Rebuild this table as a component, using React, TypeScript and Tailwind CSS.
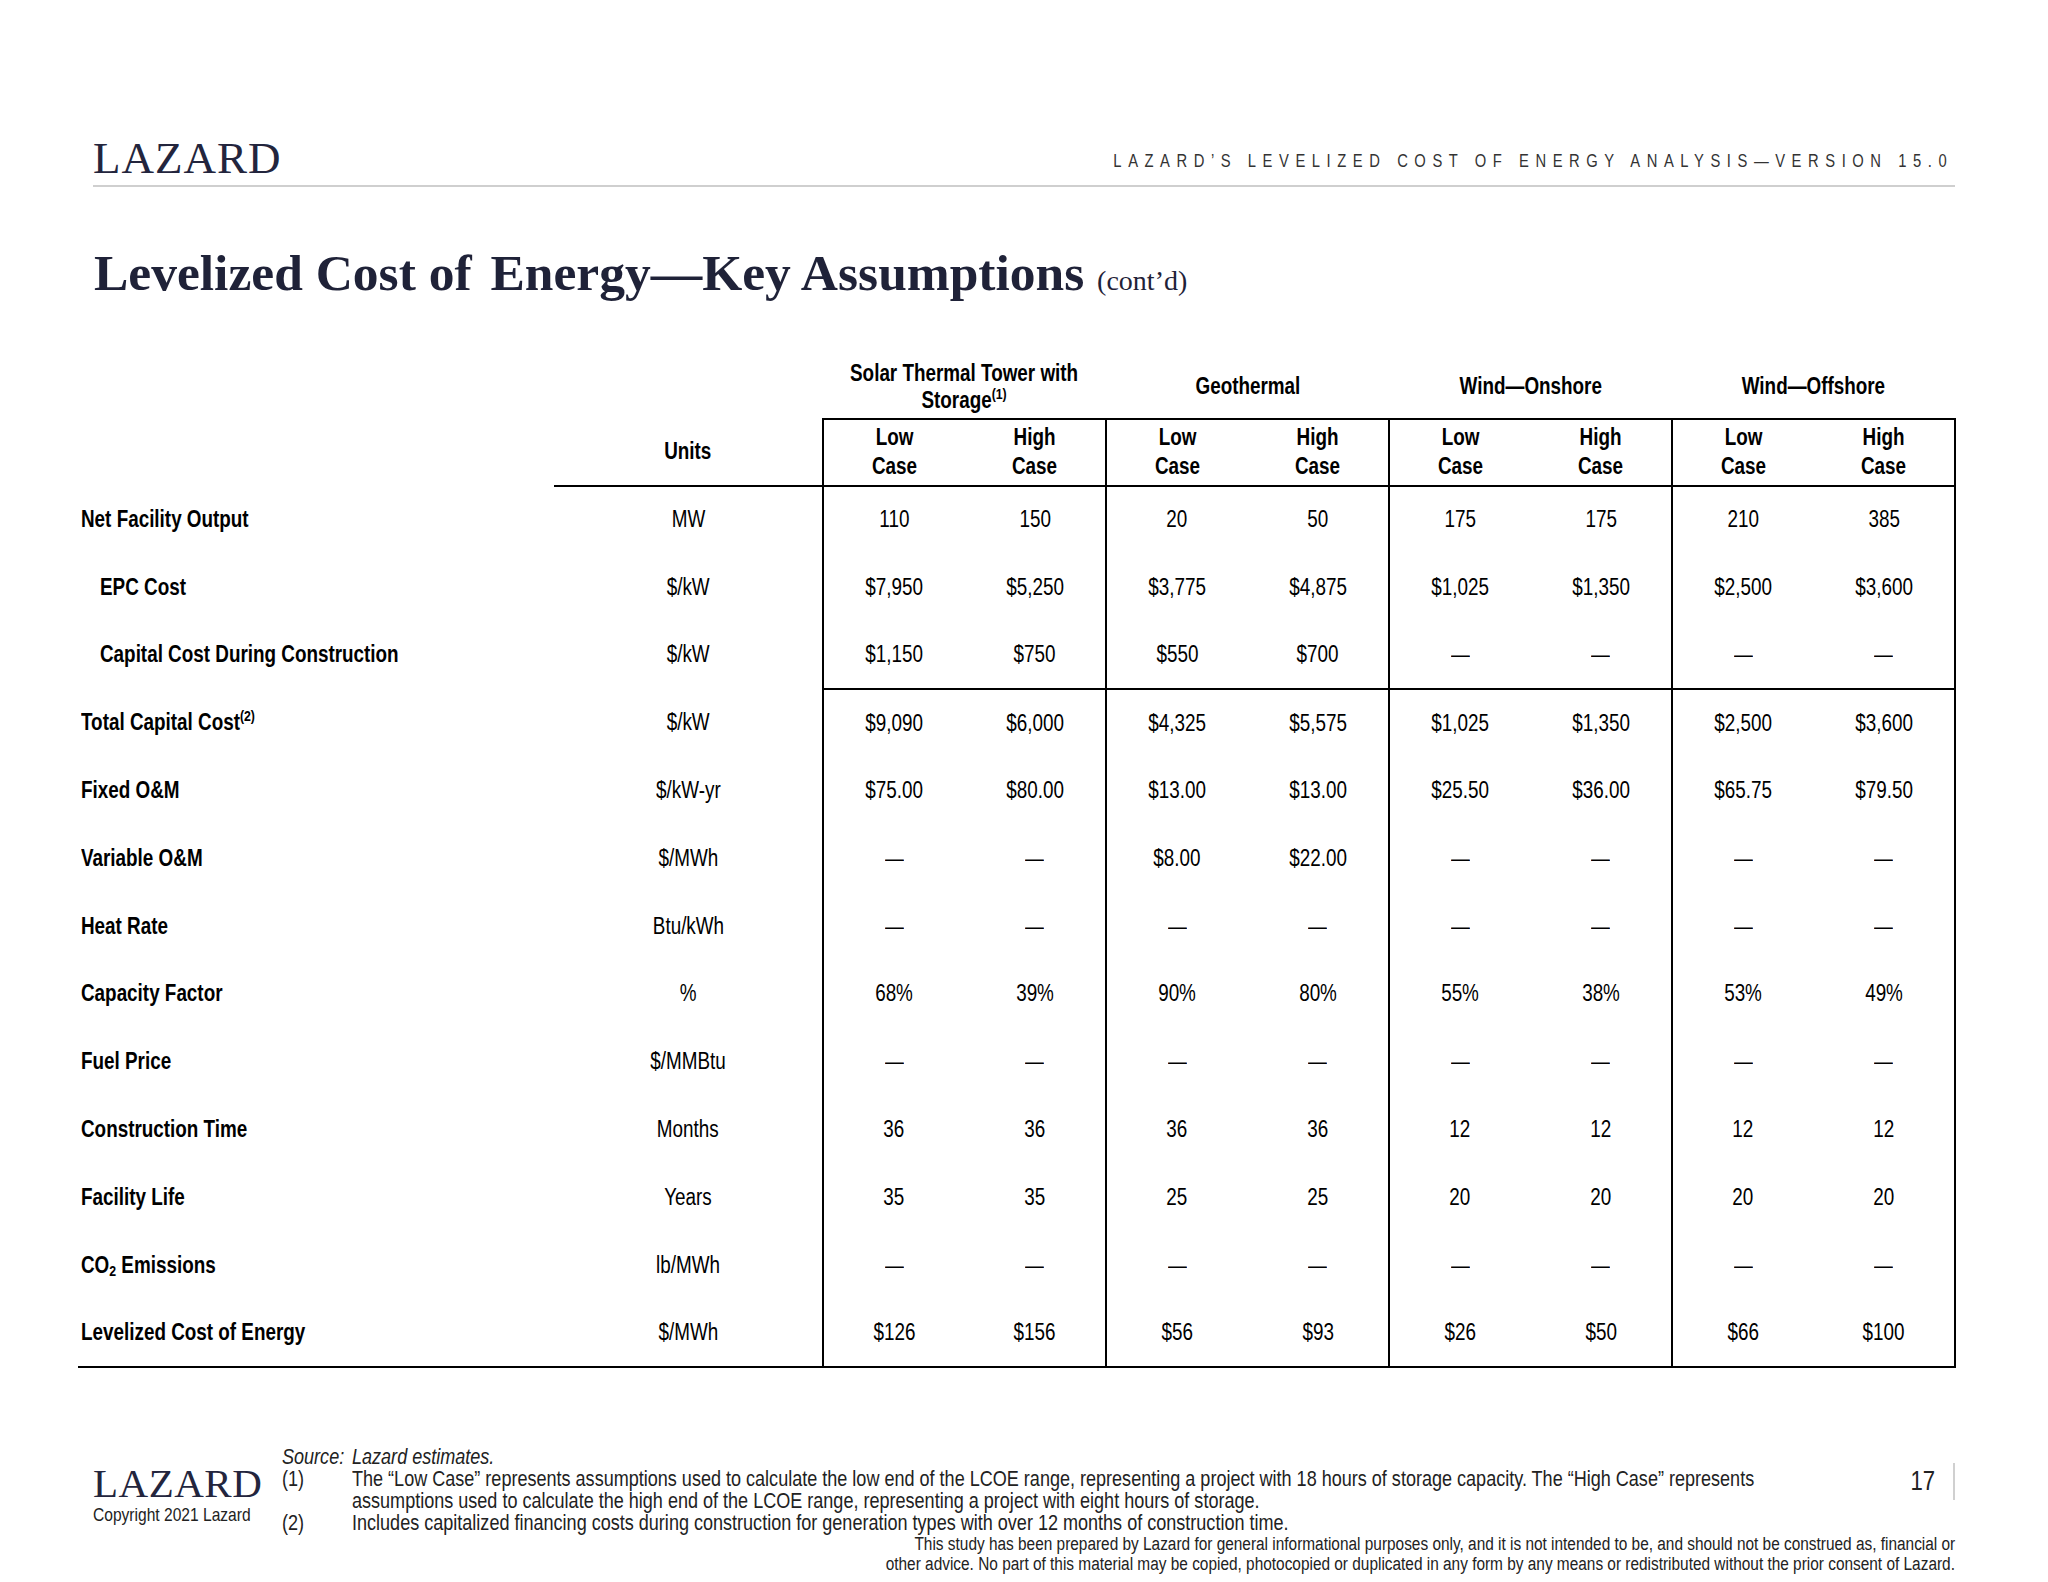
import React from "react";

const sans = { fontFamily: '"Liberation Sans", Arial, sans-serif' };
const serif = { fontFamily: '"Liberation Serif", "Times New Roman", serif' };

// Arial Narrow is not installed, so Arial metrics are squeezed horizontally
const Narrow = ({ children, origin = "origin-center" }: { children: React.ReactNode; origin?: string }) => (
  <span className={`inline-block whitespace-nowrap scale-x-[0.82] ${origin}`}>{children}</span>
);

type Row = {
  label: React.ReactNode;
  unit: string;
  values: string[];
  indent?: boolean;
  divider?: boolean;
};

const D = "—";

const rows: Row[] = [
  { label: "Net Facility Output", unit: "MW", values: ["110", "150", "20", "50", "175", "175", "210", "385"] },
  { label: "EPC Cost", unit: "$/kW", indent: true, values: ["$7,950", "$5,250", "$3,775", "$4,875", "$1,025", "$1,350", "$2,500", "$3,600"] },
  { label: "Capital Cost During Construction", unit: "$/kW", indent: true, divider: true, values: ["$1,150", "$750", "$550", "$700", D, D, D, D] },
  {
    label: (
      <>
        Total Capital Cost<sup className="text-[15px] -top-[0.6em]">(2)</sup>
      </>
    ),
    unit: "$/kW",
    values: ["$9,090", "$6,000", "$4,325", "$5,575", "$1,025", "$1,350", "$2,500", "$3,600"],
  },
  { label: "Fixed O&M", unit: "$/kW-yr", values: ["$75.00", "$80.00", "$13.00", "$13.00", "$25.50", "$36.00", "$65.75", "$79.50"] },
  { label: "Variable O&M", unit: "$/MWh", values: [D, D, "$8.00", "$22.00", D, D, D, D] },
  { label: "Heat Rate", unit: "Btu/kWh", values: [D, D, D, D, D, D, D, D] },
  { label: "Capacity Factor", unit: "%", values: ["68%", "39%", "90%", "80%", "55%", "38%", "53%", "49%"] },
  { label: "Fuel Price", unit: "$/MMBtu", values: [D, D, D, D, D, D, D, D] },
  { label: "Construction Time", unit: "Months", values: ["36", "36", "36", "36", "12", "12", "12", "12"] },
  { label: "Facility Life", unit: "Years", values: ["35", "35", "25", "25", "20", "20", "20", "20"] },
  {
    label: (
      <>
        CO<sub className="text-[15px]">2</sub> Emissions
      </>
    ),
    unit: "lb/MWh",
    values: [D, D, D, D, D, D, D, D],
  },
  { label: "Levelized Cost of Energy", unit: "$/MWh", values: ["$126", "$156", "$56", "$93", "$26", "$50", "$66", "$100"] },
];

const groups: React.ReactNode[] = [
  <>
    Solar Thermal Tower with
    <br />
    Storage<sup className="text-[15px] -top-[0.6em]">(1)</sup>
  </>,
  "Geothermal",
  "Wind—Onshore",
  "Wind—Offshore",
];

function sideBorder(i: number) {
  return i % 2 === 0 ? "border-l-2" : "border-r-2";
}

export default function App() {
  return (
    <div className="w-[2048px] h-[1582px] bg-white overflow-hidden text-black" style={sans}>
      {/* header */}
      <div className="mx-[93px] pt-[136px] flex items-end justify-between">
        <div className="text-[45px] leading-none text-[#23253d] tracking-[1px]" style={serif}>
          LAZARD
        </div>
        <div className="text-[18px] leading-[18px] mb-[11px] mr-[2px] tracking-[8px] text-[#333]">
          <Narrow origin="origin-right">LAZARD’S LEVELIZED COST OF ENERGY ANALYSIS—VERSION 15.0</Narrow>
        </div>
      </div>
      <div className="mx-[93px] mt-[4px] h-[2px] bg-[#cfcfcf]" />

      <h1 className="ml-[94px] mt-[60px] text-[51.5px] leading-none font-bold text-[#1f2238]" style={serif}>
        Levelized Cost of <span className="ml-[6px]">Energy—Key Assumptions</span>{" "}
        <span className="text-[28px] font-normal">(cont’d)</span>
      </h1>

      {/* table */}
      <table className="ml-[78px] mt-[57px] w-[1877px] table-fixed border-collapse">
        <colgroup>
          <col className="w-[476px]" />
          <col className="w-[269px]" />
          {Array.from({ length: 8 }).map((_, i) => (
            <col key={i} className="w-[141.5px]" />
          ))}
        </colgroup>
        <thead>
          <tr className="h-[63px] text-[23px] leading-[27px]">
            <th />
            <th />
            {groups.map((g, i) => (
              <th key={i} colSpan={2} className="align-middle text-center font-bold">
                <Narrow>{g}</Narrow>
              </th>
            ))}
          </tr>
          <tr className="h-[67px] text-[23px] leading-[29px]">
            <th />
            <th className="border-b-2 border-black text-center font-bold">
              <Narrow>Units</Narrow>
            </th>
            {Array.from({ length: 8 }).map((_, i) => (
              <th key={i} className={`border-t-2 border-b-2 border-black text-center font-bold ${sideBorder(i)}`}>
                <Narrow>
                  {i % 2 === 0 ? "Low" : "High"}
                  <br />
                  Case
                </Narrow>
              </th>
            ))}
          </tr>
        </thead>
        <tbody>
          {rows.map((r, ri) => {
            const last = ri === rows.length - 1;
            return (
              <tr key={ri} className="h-[67.8px] text-[23px] leading-[27px]">
                <td
                  className={`font-bold text-left align-middle ${r.indent ? "pl-[22px]" : "pl-[3px]"} ${
                    last ? "border-b-2 border-black" : ""
                  }`}
                >
                  <Narrow origin="origin-left">{r.label}</Narrow>
                </td>
                <td className={`text-center align-middle ${last ? "border-b-2 border-black" : ""}`}>
                  <Narrow>{r.unit}</Narrow>
                </td>
                {r.values.map((v, i) => (
                  <td
                    key={i}
                    className={`text-center align-middle border-black ${sideBorder(i)} ${
                      r.divider || last ? "border-b-2" : ""
                    }`}
                  >
                    <Narrow>{v}</Narrow>
                  </td>
                ))}
              </tr>
            );
          })}
        </tbody>
      </table>

      {/* footer */}
      <div className="mx-[93px] mt-[78px] flex">
        <div className="w-[189px] shrink-0">
          <div className="mt-[17px] text-[41px] leading-none text-[#23253d] tracking-[0.5px]" style={serif}>
            LAZARD
          </div>
          <div className="mt-[1px] text-[19px] leading-[20px] text-[#222]">
            <Narrow origin="origin-left">Copyright 2021 Lazard</Narrow>
          </div>
        </div>
        <div className="flex-1 min-w-0 text-[22px] leading-[22px] text-[#222]">
          <div className="flex">
            <span className="w-[70px] shrink-0 italic">
              <Narrow origin="origin-left">Source:</Narrow>
            </span>
            <span className="italic">
              <Narrow origin="origin-left">Lazard estimates.</Narrow>
            </span>
          </div>
          <div className="flex">
            <span className="w-[70px] shrink-0">
              <Narrow origin="origin-left">(1)</Narrow>
            </span>
            <Narrow origin="origin-left">
              The “Low Case” represents assumptions used to calculate the low end of the LCOE range, representing a
              project with 18 hours of storage capacity. The “High Case” represents
              <br />
              assumptions used to calculate the high end of the LCOE range, representing a project with eight hours of
              storage.
            </Narrow>
          </div>
          <div className="flex">
            <span className="w-[70px] shrink-0">
              <Narrow origin="origin-left">(2)</Narrow>
            </span>
            <Narrow origin="origin-left">
              Includes capitalized financing costs during construction for generation types with over 12 months of
              construction time.
            </Narrow>
          </div>
        </div>
        <div className="shrink-0 mt-[17px] flex items-center h-[37px]">
          <span className="text-[27px] leading-none text-[#222]">
            <Narrow origin="origin-right">17</Narrow>
          </span>
          <span className="ml-[18px] w-[2px] h-[37px] bg-[#d0d0d0]" />
        </div>
      </div>
      <div className="mx-[93px] text-right text-[18.8px] leading-[20px] text-[#222]">
        <div>
          <Narrow origin="origin-right">
            This study has been prepared by Lazard for general informational purposes only, and it is not intended to
            be, and should not be construed as, financial or
          </Narrow>
        </div>
        <div>
          <Narrow origin="origin-right">
            other advice. No part of this material may be copied, photocopied or duplicated in any form by any means or
            redistributed without the prior consent of Lazard.
          </Narrow>
        </div>
      </div>
    </div>
  );
}
